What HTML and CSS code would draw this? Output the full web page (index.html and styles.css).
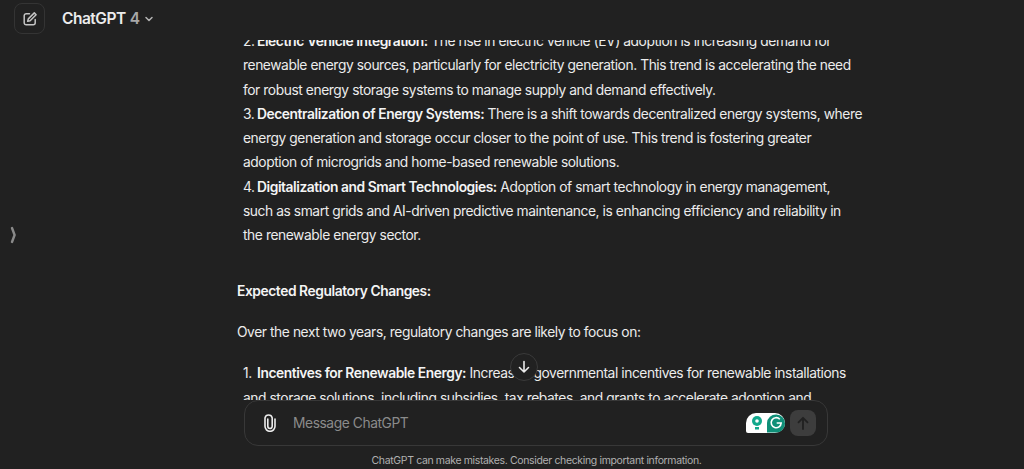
FILE: index.html
```html
<!DOCTYPE html>
<html lang="en">
<head>
    <meta charset="UTF-8">
    <meta name="viewport" content="width=device-width, initial-scale=1.0">
    <title>ChatGPT</title>
    <link rel="stylesheet" href="styles.css">
</head>
<body>
    <header class="topBar">
        <button class="newChat">
            <svg width="16" height="16" viewBox="0 0 16 16" fill="none" stroke="currentColor" stroke-width="1.5" stroke-linecap="round" stroke-linejoin="round">
                <path d="M7.5 2.8H4.2A2 2 0 0 0 2.2 4.8v7a2 2 0 0 0 2 2h7a2 2 0 0 0 2-2V8.600"/>
                <path d="M12.300 1.900l1.800 1.800-6 6-2.400.6.6-2.400z"/>
            </svg>
        </button>
        <div class="modelName">ChatGPT<span class="modelNum">4</span>
            <svg width="10" height="10" viewBox="0 0 10 10" fill="none" stroke="currentColor" stroke-width="1.5" stroke-linecap="round" stroke-linejoin="round">
                <path d="M2 3.500l3 3 3-3"/>
            </svg>
        </div>
    </header>

    <!-- sidebar handle -->
    <svg class="sideHandle" width="8" height="18" viewBox="0 0 8 18" fill="none" stroke="currentColor" stroke-width="2.400" stroke-linecap="round" stroke-linejoin="round">
        <path d="M2 2l2.600 7L2 16"/>
    </svg>

    <main class="thread">
        <div class="article">
            <ol class="points">
                <li><span class="num">2.</span><b>Electric Vehicle Integration:</b> The rise in electric vehicle (EV) adoption is increasing demand for</li>
                <li>renewable energy sources, particularly for electricity generation. This trend is accelerating the need</li>
                <li>for robust energy storage systems to manage supply and demand effectively.</li>
                <li><span class="num">3.</span><b>Decentralization of Energy Systems:</b> There is a shift towards decentralized energy systems, where</li>
                <li>energy generation and storage occur closer to the point of use. This trend is fostering greater</li>
                <li>adoption of microgrids and home-based renewable solutions.</li>
                <li><span class="num">4.</span><b>Digitalization and Smart Technologies:</b> Adoption of smart technology in energy management,</li>
                <li>such as smart grids and AI-driven predictive maintenance, is enhancing efficiency and reliability in</li>
                <li>the renewable energy sector.</li>
            </ol>
            <p class="heading"><b>Expected Regulatory Changes:</b></p>
            <p class="intro">Over the next two years, regulatory changes are likely to focus on:</p>
            <ol class="points">
                <li><span class="num">1.</span><b>Incentives for Renewable Energy:</b> Increased governmental incentives for renewable installations</li>
                <li>and storage solutions, including subsidies, tax rebates, and grants to accelerate adoption and</li>
            </ol>
        </div>
        <button class="scrollDown">
            <svg width="16" height="16" viewBox="0 0 16 16" fill="none" stroke="currentColor" stroke-width="1.600" stroke-linecap="round" stroke-linejoin="round">
                <path d="M8 2.500v10.500M3.500 8.500L8 13l4.500-4.500"/>
            </svg>
        </button>
    </main>

    <form class="composer">
        <svg class="clip" width="18" height="18" viewBox="0 0 18 18" fill="none" stroke="currentColor" stroke-width="1.600" stroke-linecap="round">
            <path d="M6.800 5.500v7.300a2.200 2.200 0 0 0 4.400 0V4.400a3.700 3.700 0 0 0-7.200 0v8.400a5 5 0 0 0 10 0V5.500" transform="translate(0 -.5)"/>
        </svg>
        <span class="placeholder">Message ChatGPT</span>
        <span class="grammarly">
            <svg width="39" height="20" viewBox="0 0 39 20">
                <circle cx="11" cy="8" r="5" fill="#12a88c"/>
                <circle cx="11" cy="8" r="1.800" fill="#fff"/>
                <rect x="9" y="14" width="4" height="2.500" fill="#12a88c"/>
                <path d="M21 19.500V10a9 9 0 1 1 9 9.500z" fill="#0f8f78"/>
                <path d="M33.800 6.200a5 5 0 1 0 1.400 3.800h-4.500" fill="none" stroke="#fff" stroke-width="1.600"/>
            </svg>
        </span>
        <button class="send" type="button">
            <svg width="16" height="16" viewBox="0 0 16 16" fill="none" stroke="currentColor" stroke-width="1.800" stroke-linecap="round" stroke-linejoin="round">
                <path d="M8 14V2.800M3.500 7.300L8 2.800l4.500 4.500"/>
            </svg>
        </button>
    </form>
    <div class="disclaimer">ChatGPT can make mistakes. Consider checking important information.</div>
</body>
</html>
```
FILE: styles.css
```css
*{
    margin: 0;
    padding: 0;
    box-sizing: border-box;
}
button{
    background: transparent;
    border: none;
    outline: none;
}
body{
    height: 100vh;
    overflow: hidden;
    display: flex;
    flex-direction: column;
    background: #212121;
    color: #ececec;
    font-family: Inter, "Liberation Sans", sans-serif;
    font-size: 13.800px;
    letter-spacing: -0.43px;
}
.topBar{
    height: 40px;
    flex: none;
    display: flex;
    align-items: flex-start;
    gap: 17px;
    padding: 3px 0 0 14px;
}
.newChat{
    width: 31px;
    height: 31px;
    display: flex;
    align-items: center;
    justify-content: center;
    color: #c4c4c4;
    border: 1px solid #343434;
    border-radius: 8px;
}
.modelName{
    height: 31px;
    display: flex;
    align-items: center;
    gap: 4px;
    font-size: 15.500px;
    letter-spacing: -0.5px;
    font-weight: 600;
    color: #ececec;
}
.modelNum{
    color: #a8a8a8;
}
.modelName svg{
    color: #b4b4b4;
    margin-left: 1px;
}
.sideHandle{
    position: absolute;
    left: 10px;
    top: 226px;
    color: #8a8a8a;
}
.thread{
    position: relative;
    flex: none;
    height: 360px;
    overflow: hidden;
}
.article{
    width: 640px;
    margin: -11px 0 0 237px;
    line-height: 24.300px;
    white-space: nowrap;
}
.points{
    list-style: none;
    padding-left: 6px;
}
.num{
    display: inline-block;
    width: 14px;
}
b{
    font-weight: 600;
    color: #f4f4f4;
}
.heading{
    margin-top: 31px;
}
.intro{
    margin-top: 17px;
    margin-bottom: 17px;
}
.scrollDown{
    position: absolute;
    left: 510px;
    top: 313px;
    width: 28px;
    height: 28px;
    display: flex;
    align-items: center;
    justify-content: center;
    color: #ececec;
    background: #212121;
    border: 1px solid #3a3a3a;
    border-radius: 50%;
}
.composer{
    flex: none;
    width: 584px;
    height: 46px;
    margin-left: 244px;
    display: flex;
    align-items: center;
    padding: 0 11px 0 16px;
    border: 1px solid #383838;
    border-radius: 14px;
    background: #212121;
}
.clip{
    color: #ececec;
}
.placeholder{
    flex: 1;
    margin-left: 14px;
    color: #8b8b8b;
}
.grammarly{
    width: 39px;
    height: 20px;
    margin-right: 5px;
    display: flex;
    align-items: center;
    background: #fff;
    border-radius: 10px 10px 10px 2px;
}
.send{
    width: 26px;
    height: 26px;
    display: flex;
    align-items: center;
    justify-content: center;
    color: #212121;
    background: #3d3d3d;
    border-radius: 8px;
}
.disclaimer{
    margin-top: 8px;
    text-align: center;
    font-size: 10.500px;
    letter-spacing: -0.36px;
    line-height: 14px;
    color: #b0b0b0;
    padding-left: 49px;
}
```
